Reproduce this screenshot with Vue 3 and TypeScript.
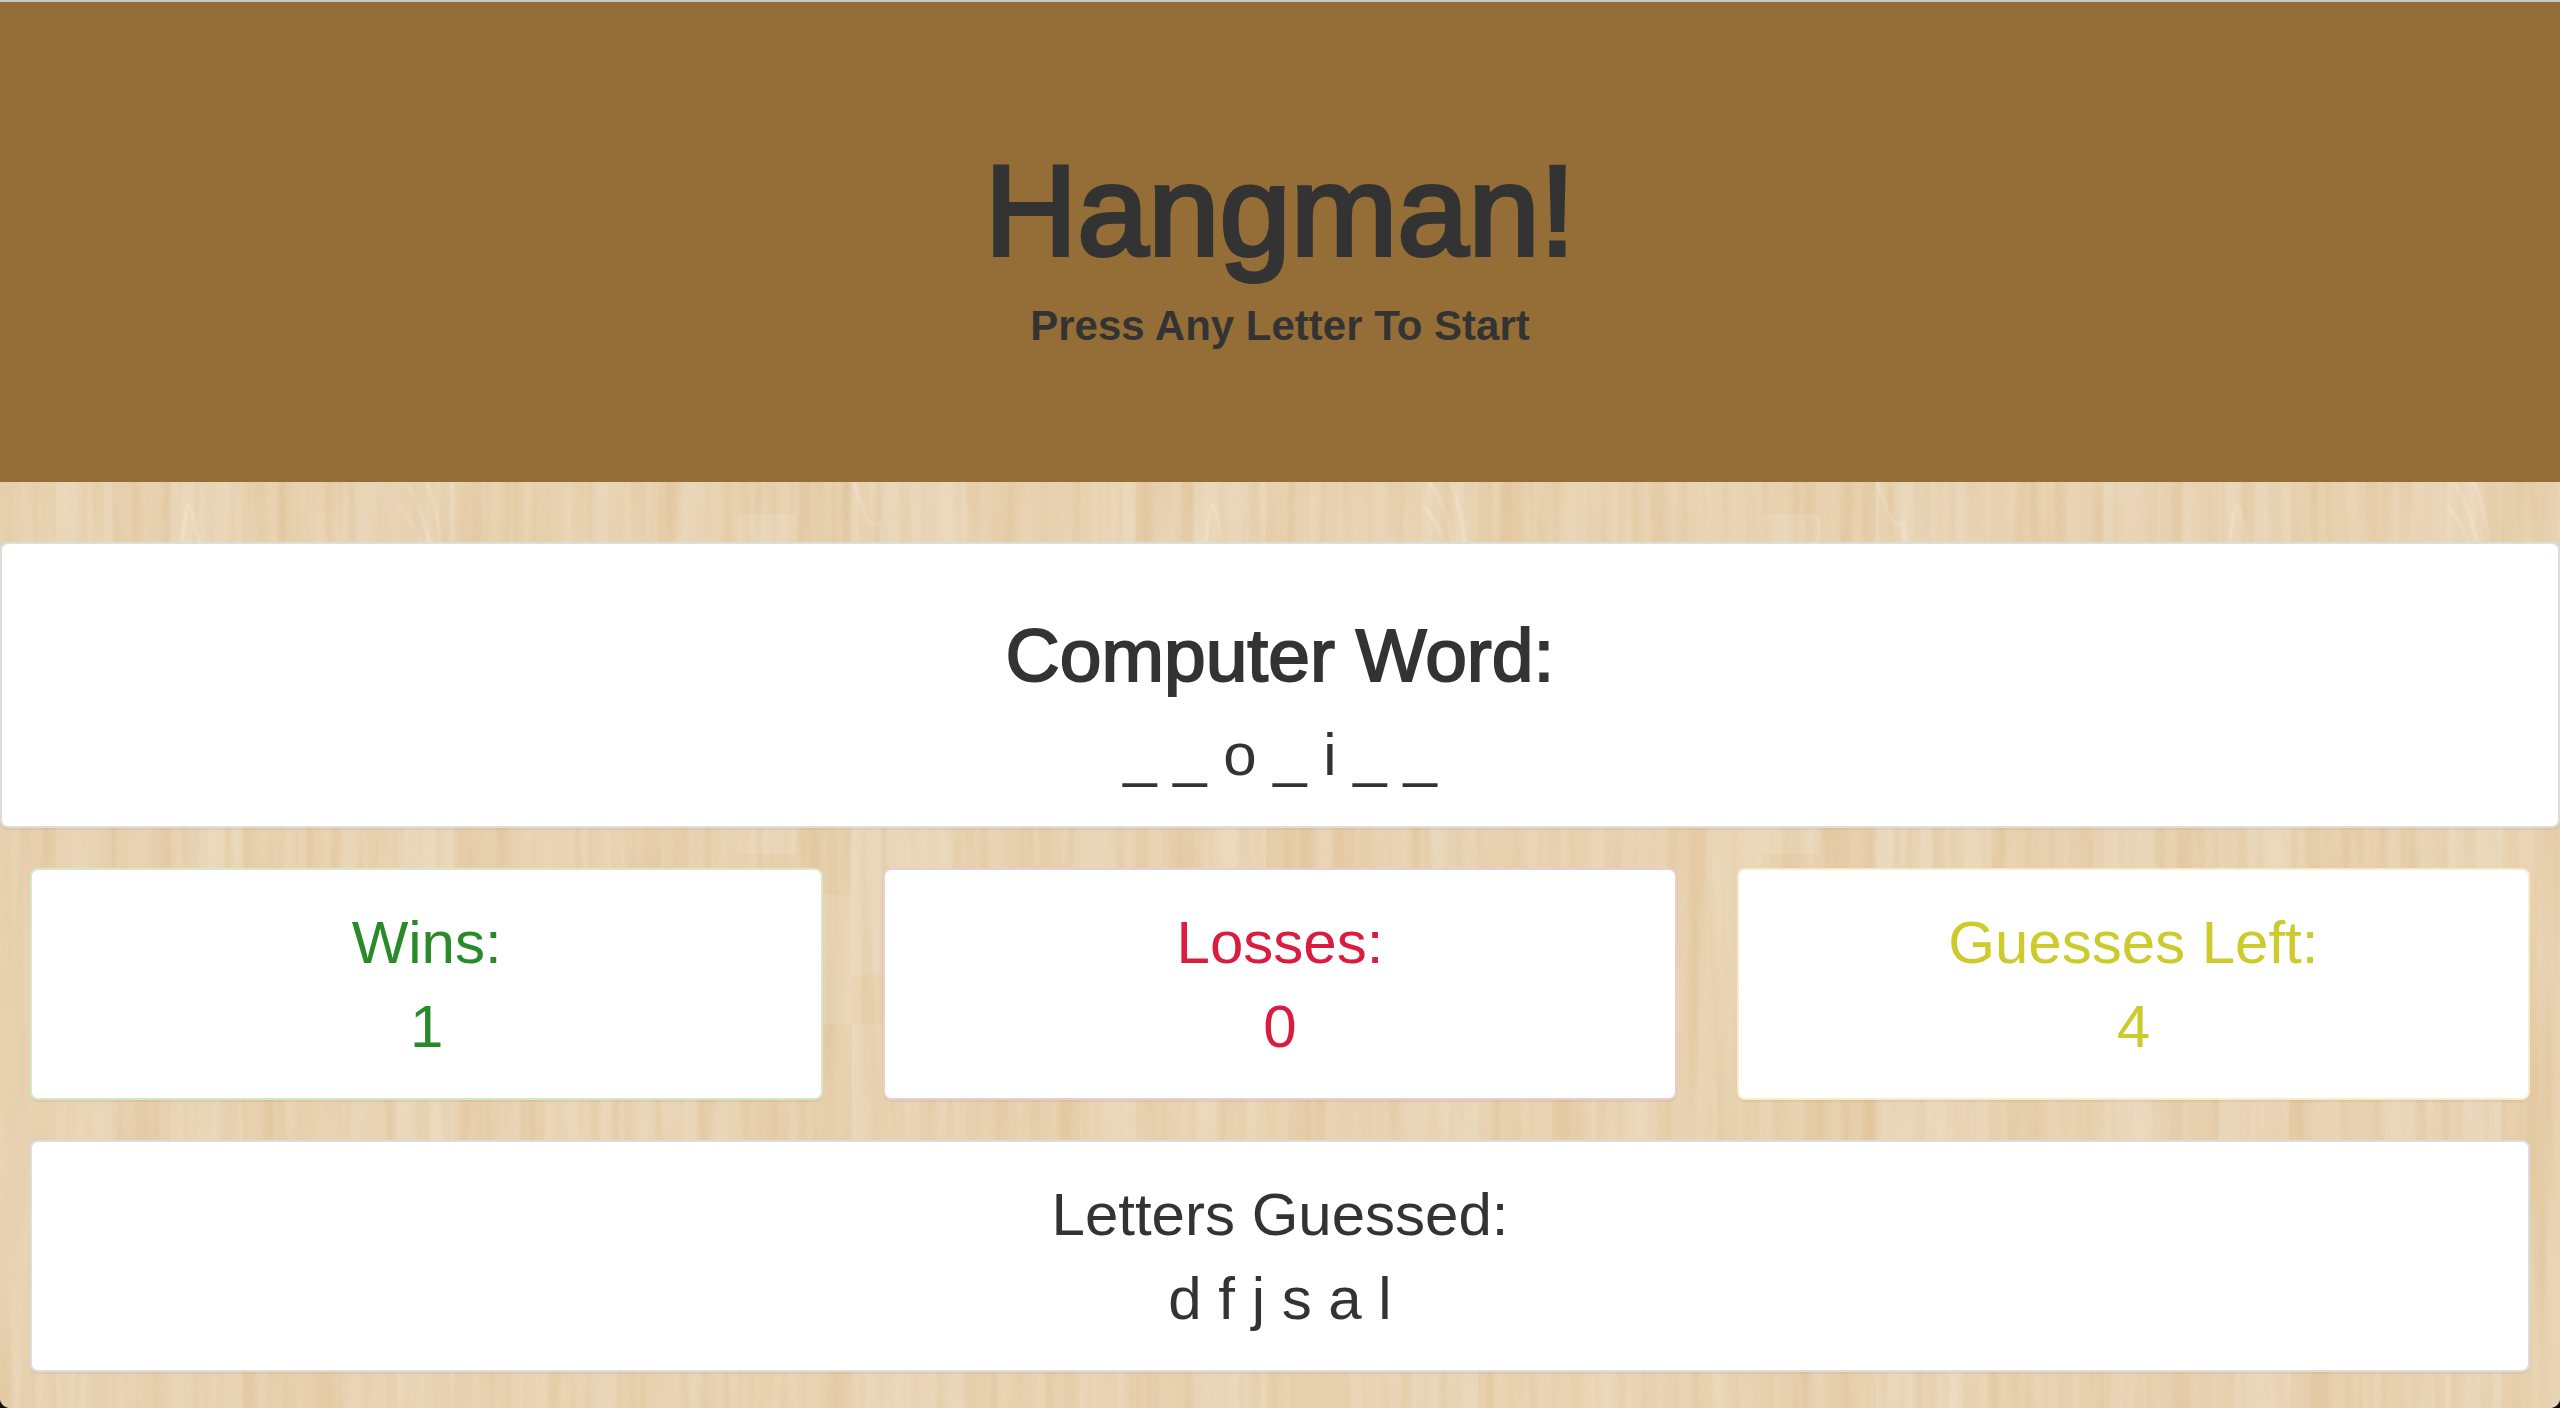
<script setup lang="ts">
import { computed, onBeforeUnmount, onMounted, ref } from 'vue'

interface Score {
  label: string
  value: number
  tone: 'success' | 'danger' | 'warning'
}

interface Plank {
  x: number
  y: number
  width: number
  height: number
  fill: string
}

const word = 'trolips'
const guessed = ref<string[]>(['d', 'f', 'j', 's', 'a', 'l'])
const revealed = ref<string[]>(['_', '_', 'o', '_', 'i', '_', '_'])
const wins = ref(1)
const losses = ref(0)
const guessesLeft = ref(4)

const scores = computed<Score[]>(() => [
  { label: 'Wins:', value: wins.value, tone: 'success' },
  { label: 'Losses:', value: losses.value, tone: 'danger' },
  { label: 'Guesses Left:', value: guessesLeft.value, tone: 'warning' },
])

// Boards of one 1024px floor tile; the short ones at the end are butt joints.
const planks: Plank[] = [
  { x: 0, y: 0, width: 56, height: 1024, fill: '#e7d1b0' },
  { x: 56, y: 0, width: 56, height: 1024, fill: '#e9d6b8' },
  { x: 112, y: 0, width: 58, height: 1024, fill: '#e7d0af' },
  { x: 170, y: 0, width: 72, height: 1024, fill: '#e9d6b8' },
  { x: 242, y: 0, width: 44, height: 1024, fill: '#e6cfac' },
  { x: 286, y: 0, width: 56, height: 1024, fill: '#e8d1b0' },
  { x: 342, y: 0, width: 56, height: 1024, fill: '#e8d4b5' },
  { x: 398, y: 0, width: 56, height: 1024, fill: '#e9d7ba' },
  { x: 454, y: 0, width: 56, height: 1024, fill: '#e7d0ae' },
  { x: 510, y: 0, width: 58, height: 1024, fill: '#e8d3b2' },
  { x: 568, y: 0, width: 56, height: 1024, fill: '#e9d5b6' },
  { x: 624, y: 0, width: 58, height: 1024, fill: '#e8d2b1' },
  { x: 682, y: 0, width: 56, height: 1024, fill: '#e8d4b4' },
  { x: 738, y: 0, width: 58, height: 1024, fill: '#e7d0ae' },
  { x: 796, y: 0, width: 56, height: 1024, fill: '#e6cfac' },
  { x: 852, y: 0, width: 58, height: 1024, fill: '#e9d7ba' },
  { x: 910, y: 0, width: 56, height: 1024, fill: '#e9d6b8' },
  { x: 966, y: 0, width: 58, height: 1024, fill: '#e7d0ae' },
  { x: 738, y: 514, width: 58, height: 340, fill: '#e9d6b8' },
  { x: 796, y: 895, width: 56, height: 129, fill: '#e8d5b6' },
  { x: 852, y: 975, width: 58, height: 49, fill: '#e7d1af' },
]

function onKey(event: KeyboardEvent) {
  const letter = event.key.toLowerCase()
  if (!/^[a-z]$/.test(letter) || guessed.value.includes(letter)) return
  if (word.includes(letter)) {
    revealed.value = revealed.value.map((c, i) => (word[i] === letter ? letter : c))
  } else if (guessesLeft.value > 0) {
    guessed.value.push(letter)
    guessesLeft.value--
  }
}

onMounted(() => window.addEventListener('keyup', onKey))
onBeforeUnmount(() => window.removeEventListener('keyup', onKey))
</script>

<template>
  <div class="page">
    <svg class="wood" width="100%" height="100%" aria-hidden="true">
      <defs>
        <filter id="grain" x="0" y="0" width="100%" height="100%" color-interpolation-filters="sRGB">
          <feTurbulence type="fractalNoise" baseFrequency="0.08 0.003" numOctaves="2" seed="8" />
          <feColorMatrix
            values="0 0 0 0 0.84  0 0 0 0 0.69  0 0 0 0 0.47  1.1 0 0 0 -0.42"
          />
        </filter>
        <filter id="sheen" x="0" y="0" width="100%" height="100%" color-interpolation-filters="sRGB">
          <feTurbulence type="fractalNoise" baseFrequency="0.05 0.004" numOctaves="2" seed="21" />
          <feColorMatrix
            values="0 0 0 0 0.94  0 0 0 0 0.89  0 0 0 0 0.8  0 1.3 0 0 -0.5"
          />
        </filter>
        <pattern id="planks" width="1024" height="1024" patternUnits="userSpaceOnUse">
          <rect
            v-for="(plank, i) in planks"
            :key="i"
            :x="plank.x"
            :y="plank.y"
            :width="plank.width"
            :height="plank.height"
            :fill="plank.fill"
          />
          <g fill="none" stroke="#f0e2cb" stroke-width="4" stroke-opacity="0.55">
            <path d="M401 478c14 14 22 36 30 72" />
            <path d="M399 506c10 10 18 24 24 44" />
            <path d="M424 478c8 14 14 38 18 72" />
            <path d="M180 550c4-24 6-44 9-44s7 22 11 44" />
            <path d="M852 480c8 16 12 40 20 44s6-20 10 24" />
          </g>
        </pattern>
      </defs>
      <rect width="100%" height="100%" fill="url(#planks)" />
      <rect class="grain" width="100%" height="100%" filter="url(#grain)" />
      <rect class="sheen" width="100%" height="100%" filter="url(#sheen)" />
    </svg>

    <header class="jumbotron">
      <h1>Hangman!</h1>
      <p>Press Any Letter To Start</p>
    </header>

    <main>
      <section class="panel word">
        <h2>Computer Word:</h2>
        <p>{{ revealed.join(' ') }}</p>
      </section>

      <div class="row">
        <section v-for="score in scores" :key="score.label" class="panel" :class="score.tone">
          <p>{{ score.label }}</p>
          <p>{{ score.value }}</p>
        </section>
      </div>

      <div class="row">
        <section class="panel">
          <p>Letters Guessed:</p>
          <p>{{ guessed.join(' ') }}</p>
        </section>
      </div>
    </main>
  </div>
</template>

<style>
html {
  background: #15100a;
}
</style>

<style scoped>
.page {
  position: relative;
  isolation: isolate;
  overflow: hidden;
  min-height: 100vh;
  box-sizing: border-box;
  border-radius: 0 0 10px 10px;
  padding-bottom: 36px;
  background: #e8d3b3;
  color: #333;
  font-family: "Liberation Sans", Arial, sans-serif;
  text-align: center;
}

.wood {
  position: absolute;
  inset: 0;
  z-index: -1;
}

.grain,
.sheen {
  opacity: 0.6;
}

h1,
h2,
p {
  margin: 0;
}

.jumbotron {
  border-top: 2px solid #c6c8cc;
  margin-bottom: 60px;
  padding: 140px 30px 126px;
  background: #956e37;
}

.jumbotron h1 {
  margin-bottom: 16px;
  font-size: 128px;
  font-weight: 500;
  line-height: 138px;
  -webkit-text-stroke: 4px #333;
}

.jumbotron p {
  font-size: 42px;
  font-weight: 700;
  line-height: 60px;
}

main {
  display: flex;
  flex-direction: column;
  gap: 40px;
}

.row {
  display: flex;
  gap: 60px;
  padding: 0 30px;
}

.panel {
  flex: 1;
  padding: 31px 30px 29px;
  border: 2px solid #ddd;
  border-radius: 8px;
  background: #fff;
  box-shadow: 0 2px 2px rgba(0, 0, 0, 0.05);
}

.panel h2 {
  margin: 41px 0 19px;
  font-size: 75px;
  font-weight: 500;
  line-height: 78px;
  -webkit-text-stroke: 2px #333;
}

.panel p {
  font-size: 60px;
  line-height: 84px;
}

.success {
  border-color: #d6e9c6;
  color: #298a29;
}

.danger {
  border-color: #ebccd1;
  color: #d91c3f;
}

.warning {
  border-color: #faebcc;
  color: #cccb2b;
}
</style>
